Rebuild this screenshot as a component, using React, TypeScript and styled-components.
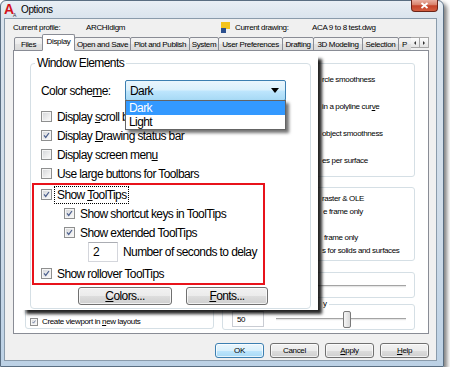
import React from 'react';
import styled, { createGlobalStyle } from 'styled-components';

const GlobalStyle = createGlobalStyle`
  html, body { margin: 0; padding: 0; background: #fff; overflow: hidden; }
  body { font-family: "Liberation Sans", Arial, sans-serif; color: #000; }
  * { box-sizing: border-box; }
`;

const Window = styled.div`
  position: relative;
  width: 444px;
  height: 367px;
  display: flex;
  flex-direction: column;
  padding: 0 6px 5px 3px;
  border: 1px solid #5a6e82;
  border-radius: 6px 6px 0 0;
  background: linear-gradient(180deg, #e9eff5 0%, #d9e3ed 5%, #cfdce9 60%, #bcd1e5 100%);
  box-shadow: 3px 3px 4px rgba(0, 0, 0, 0.5);
`;

const TitleBar = styled.div`
  height: 17px;
  display: flex;
  align-items: center;
  gap: 3px;
`;

const Title = styled.span`
  font-size: 10px;
  letter-spacing: -0.4px;
`;

const CloseButton = styled.div`
  margin-left: auto;
  margin-right: -1px;
  margin-top: -1px;
  align-self: flex-start;
  width: 27px;
  height: 12px;
  border: 1px solid #6b2418;
  border-top: none;
  border-radius: 0 0 4px 4px;
  background: linear-gradient(180deg, #eab0a2 0%, #d88069 45%, #c4432a 52%, #d35e40 100%);
  display: flex;
  align-items: center;
  justify-content: center;
`;

const Client = styled.div`
  flex: 1;
  display: flex;
  flex-direction: column;
  background: #f0f0f0;
  border: 1px solid #8a9bab;
  padding: 2px 7px 2px 8px;
  font-size: 8px;
  letter-spacing: -0.35px;
`;

const ProfileRow = styled.div`
  height: 13px;
  display: flex;
  align-items: center;
  white-space: nowrap;
`;

const Field = styled.span<{ $w?: number }>`
  flex: none;
  width: ${p => (p.$w ? `${p.$w}px` : 'auto')};
`;

const TabStrip = styled.div`
  height: 16px;
  display: flex;
  position: relative;
  z-index: 1;
`;

const TabList = styled.div`
  flex: 1;
  height: 17px;
  margin-bottom: -1px;
  padding-left: 1px;
  display: flex;
  align-items: flex-end;
  overflow: hidden;
`;

const Tab = styled.div<{ $w: number; $active?: boolean }>`
  flex: none;
  position: relative;
  z-index: ${p => (p.$active ? 2 : 1)};
  width: ${p => p.$w}px;
  height: ${p => (p.$active ? 17 : 14)}px;
  margin-right: -1px;
  border: 1px solid #898c95;
  border-bottom-color: ${p => (p.$active ? '#fff' : '#898c95')};
  border-radius: 2px 2px 0 0;
  background: ${p =>
    p.$active ? '#fff' : 'linear-gradient(180deg, #f4f4f4 0%, #ececec 50%, #e1e1e1 51%, #dadada 100%)'};
  display: flex;
  align-items: center;
  justify-content: ${p => (p.$w < 20 ? 'flex-start' : 'center')};
  padding: 0 0 ${p => (p.$active ? 2 : 0)}px ${p => (p.$w < 20 ? 3 : 0)}px;
  white-space: nowrap;
`;

const ScrollArrows = styled.div`
  display: flex;
  align-self: flex-start;
  margin-top: 3px;
`;

const ArrowButton = styled.div<{ $dir: 'left' | 'right' }>`
  width: 10px;
  height: 11px;
  margin-left: -1px;
  border: 1px solid #a7a7a7;
  background: linear-gradient(180deg, #fdfdfd, #e4e4e4);
  display: flex;
  align-items: center;
  justify-content: center;
  &::after {
    content: '';
    border-top: 2px solid transparent;
    border-bottom: 2px solid transparent;
    ${p => (p.$dir === 'left' ? 'border-right: 2px solid #333;' : 'border-left: 2px solid #333;')}
  }
`;

const Panel = styled.div`
  height: 284px;
  border: 1px solid #898c95;
  background: #fff;
  display: grid;
  grid-template-columns: 189px 193px;
  column-gap: 8px;
  padding: 7px 13px 3px 11px;
`;

const Column = styled.div`
  display: flex;
  flex-direction: column;
  min-height: 0;
`;

const Group = styled.fieldset<{ $h?: number; $mt?: number; $pl?: number; $pt?: number }>`
  margin: ${p => p.$mt || 0}px 0 0 0;
  min-width: 0;
  height: ${p => (p.$h ? `${p.$h}px` : 'auto')};
  border: 1px solid #d5dfe5;
  border-radius: 3px;
  padding: ${p => p.$pt ?? 1}px 8px 0 ${p => p.$pl ?? 8}px;
  display: flex;
  flex-direction: column;
`;

const Legend = styled.legend`
  padding: 0 2px;
  line-height: 10px;
  font-size: 8px;
`;

const SmallRow = styled.div<{ $h?: number }>`
  flex: none;
  height: ${p => p.$h || 13}px;
  display: flex;
  align-items: center;
  gap: 4px;
  white-space: nowrap;
`;

const ResList = styled.div`
  display: flex;
  flex-direction: column;
  gap: 7px;
`;

const ValueBox = styled.span<{ $w: number; $h?: number }>`
  flex: none;
  width: ${p => p.$w}px;
  height: ${p => p.$h || 16}px;
  border: 1px solid #c9ccd3;
  border-top-color: #abadb3;
  background: #fff;
  display: flex;
  align-items: center;
  padding-left: 4px;
`;

/* label whose start lies under the magnified callout: only its tail shows */
const Tail = styled.span<{ $from: number }>`
  margin-left: ${p => p.$from}px;
`;

const Track = styled.div<{ $gap?: number }>`
  position: relative;
  flex: 1;
  height: 3px;
  border-top: 1px solid #a4a4a4;
  border-bottom: 1px solid #fafafa;
  background: #e6e6e6;
  margin-left: ${p => p.$gap || 0}px;
`;

const Thumb = styled.div<{ $left: number }>`
  position: absolute;
  left: ${p => p.$left}px;
  top: -8px;
  width: 8px;
  height: 17px;
  border: 1px solid #7a7a7a;
  border-radius: 2px;
  background: linear-gradient(90deg, #f6f6f6, #d9d9d9);
`;

const Box = styled.span<{ $size: number }>`
  flex: none;
  width: ${p => p.$size}px;
  height: ${p => p.$size}px;
  border: 1px solid #8e8f8f;
  background: linear-gradient(135deg, #d2d4d7 0%, #f1f1f1 70%, #fbfbfb 100%);
  box-shadow: inset 0 0 0 1px #f5f5f5;
  display: flex;
  padding: 1px;
`;

const ButtonRow = styled.div`
  margin-top: 9px;
  height: 15px;
  display: flex;
  justify-content: flex-end;
  gap: 6px;
`;

const DialogButton = styled.div<{ $default?: boolean }>`
  width: 49px;
  height: 15px;
  border: 1px solid ${p => (p.$default ? '#3c7fb1' : '#707070')};
  border-radius: 3px;
  background: ${p =>
    p.$default
      ? 'linear-gradient(180deg, #eaf6fd 0%, #d9f0fc 50%, #bee6fd 51%, #a7d9f5 100%)'
      : 'linear-gradient(180deg, #f2f2f2 0%, #ebebeb 50%, #dddddd 51%, #cfcfcf 100%)'};
  box-shadow: inset 0 0 0 1px rgba(255, 255, 255, 0.7);
  display: flex;
  align-items: center;
  justify-content: center;
`;

/* magnified callout of the Window Elements group */
const Overlay = styled.div`
  position: absolute;
  left: 21px;
  top: 54px;
  width: 296px;
  height: 255px;
  z-index: 5;
  background: #fff;
  padding: 1px 7px 2px 8px;
  box-shadow: 4px 4px 3px rgba(0, 0, 0, 0.85);
  font-size: 12px;
  letter-spacing: -0.6px;
`;

const BigGroup = styled.fieldset`
  margin: 0;
  min-width: 0;
  height: 253px;
  border: 1px solid #d5dfe5;
  border-radius: 4px;
  padding: 10px 0 0 10px;
  display: flex;
  flex-direction: column;
`;

const BigLegend = styled.legend`
  margin-left: -6px;
  padding: 0 2px;
  line-height: 14px;
  font-size: 12px;
`;

const ColorRow = styled.div`
  height: 21px;
  display: flex;
  align-items: center;
`;

const ColorLabel = styled.span`
  width: 84px;
  flex: none;
`;

const Combo = styled.div`
  position: relative;
  width: 161px;
  height: 21px;
  border: 1px solid #3c7fb1;
  border-radius: 2px;
  background: linear-gradient(180deg, #eaf6fd 0%, #d9f0fc 48%, #bee6fd 52%, #a7d9f5 100%);
  display: flex;
  align-items: center;
  padding: 0 6px 0 4px;
  justify-content: space-between;
`;

const DropList = styled.div`
  position: absolute;
  left: -1px;
  top: 100%;
  width: 161px;
  border: 1px solid #646464;
  background: #fff;
  box-shadow: 3px 3px 3px rgba(0, 0, 0, 0.55);
`;

const DropItem = styled.div<{ $active?: boolean }>`
  height: 14px;
  line-height: 14px;
  padding-left: 3px;
  background: ${p => (p.$active ? '#3399ff' : 'transparent')};
  color: ${p => (p.$active ? '#fff' : '#000')};
`;

const CheckRow = styled.div<{ $indent?: number; $mt?: number; $h?: number }>`
  flex: none;
  height: ${p => p.$h || 19}px;
  margin-top: ${p => p.$mt || 0}px;
  padding-left: ${p => p.$indent || 0}px;
  display: flex;
  align-items: center;
  gap: 5px;
  white-space: nowrap;
`;

const Focus = styled.span`
  outline: 1px dotted #000;
  outline-offset: 0;
  padding: 1px 1px 1px 2px;
  margin-left: -2px;
`;

const Highlight = styled.div`
  width: 233px;
  margin-left: -9px;
  padding: 0 0 0 7px;
  border: 2px solid #e8131b;
`;

const NumberBox = styled.span`
  flex: none;
  width: 30px;
  height: 20px;
  border: 1px solid #d4d6dc;
  border-top-color: #abadb3;
  padding-left: 4px;
  display: flex;
  align-items: center;
`;

const BigButtons = styled.div`
  margin-top: 2px;
  padding-left: 37px;
  display: flex;
  gap: 14px;
`;

const BigButton = styled.div<{ $w: number }>`
  width: ${p => p.$w}px;
  height: 18px;
  border: 1px solid #707070;
  border-radius: 3px;
  background: linear-gradient(180deg, #f2f2f2 0%, #ebebeb 50%, #dddddd 51%, #cfcfcf 100%);
  box-shadow: inset 0 0 0 1px rgba(255, 255, 255, 0.7);
  display: flex;
  align-items: center;
  justify-content: center;
`;

const CheckMark = () => (
  <svg width="100%" height="100%" viewBox="0 0 11 11">
    <path d="M1.6 5.4 L4.3 8.6 L9.4 1.6" fill="none" stroke="#4b5f8d" strokeWidth="1.9" />
  </svg>
);

const Checkbox = ({ checked, size = 11 }: { checked?: boolean; size?: number }) => (
  <Box $size={size}>{checked && <CheckMark />}</Box>
);

const tabs = [
  { label: 'Files', w: 29 },
  { label: 'Display', w: 33, active: true },
  { label: 'Open and Save', w: 57 },
  { label: 'Plot and Publish', w: 60 },
  { label: 'System', w: 30 },
  { label: 'User Preferences', w: 65 },
  { label: 'Drafting', w: 32 },
  { label: '3D Modeling', w: 50 },
  { label: 'Selection', w: 37 },
  { label: 'P', w: 16 },
];

export default function App() {
  return (
    <>
      <GlobalStyle />
      <Window>
        <TitleBar>
          <svg width="14" height="15" viewBox="0 0 14 15">
            <text x="0" y="12" fontSize="14" fontWeight="bold" fill="#d3121c" fontFamily="Liberation Sans, sans-serif">A</text>
            <text x="9" y="15" fontSize="5" fill="#333" fontFamily="Liberation Sans, sans-serif">A</text>
          </svg>
          <Title>Options</Title>
          <CloseButton>
            <svg width="9" height="7" viewBox="0 0 9 7">
              <path d="M1.5 1 L7.5 6 M7.5 1 L1.5 6" stroke="#fff" strokeWidth="1.8" />
            </svg>
          </CloseButton>
        </TitleBar>

        <Client>
          <ProfileRow>
            <Field $w={73}>Current profile:</Field>
            <Field $w={135}>ARCHIdigm</Field>
            <svg width="9" height="11" viewBox="0 0 9 11">
              <rect x="0" y="0" width="9" height="7" fill="#f3c31c" />
              <rect x="0" y="6" width="5" height="5" fill="#2b4f8e" />
            </svg>
            <Field $w={77} style={{ marginLeft: 5 }}>Current drawing:</Field>
            <Field>ACA 9 to 8 test.dwg</Field>
          </ProfileRow>

          <TabStrip>
            <TabList>
              {tabs.map(t => (
                <Tab key={t.label} $w={t.w} $active={t.active}>
                  {t.label}
                </Tab>
              ))}
            </TabList>
            <ScrollArrows>
              <ArrowButton $dir="left" />
              <ArrowButton $dir="right" />
            </ScrollArrows>
          </TabStrip>

          <Panel>
            <Column>
              <Group $h={89} $pl={4} $pt={74} style={{ marginTop: 'auto', marginBottom: 1 }}>
                <SmallRow>
                  <Checkbox size={8} checked />
                  <span>Create viewport in <u>n</u>ew layouts</span>
                </SmallRow>
              </Group>
            </Column>

            <Column>
              <Group $h={119}>
                <Legend>Display resolution</Legend>
                <ResList>
                  <SmallRow $h={20}>
                    <ValueBox $w={40} />
                    <Tail $from={47}>rcle smoothness</Tail>
                  </SmallRow>
                  <SmallRow $h={20}>
                    <ValueBox $w={40} />
                    <Tail $from={47}>in a polyline cur<u>v</u>e</Tail>
                  </SmallRow>
                  <SmallRow $h={20}>
                    <ValueBox $w={40} />
                    <Tail $from={47}>object smoothness</Tail>
                  </SmallRow>
                  <SmallRow $h={20}>
                    <ValueBox $w={40} />
                    <Tail $from={47}>es per surface</Tail>
                  </SmallRow>
                </ResList>
              </Group>
              <Group $h={79} $mt={5} $pt={0}>
                <Legend>Display performance</Legend>
                <SmallRow>
                  <Checkbox size={9} />
                  <Tail $from={78}>raster &amp; OLE</Tail>
                </SmallRow>
                <SmallRow>
                  <Checkbox size={9} checked />
                  <Tail $from={79}>e frame only</Tail>
                </SmallRow>
                <SmallRow>
                  <Checkbox size={9} checked />
                </SmallRow>
                <SmallRow>
                  <Checkbox size={9} />
                  <Tail $from={80}>frame only</Tail>
                </SmallRow>
                <SmallRow>
                  <Checkbox size={9} />
                  <Tail $from={78}>s for solids and surfaces</Tail>
                </SmallRow>
              </Group>
              <Group $h={31} $mt={6}>
                <Legend>Crosshair size</Legend>
                <SmallRow $h={16}>
                  <ValueBox $w={40} $h={15} />
                  <Track />
                </SmallRow>
              </Group>
              <Group $h={31} $mt={1} $pl={9}>
                <Legend>
                  <Tail $from={89}>y</Tail>
                </Legend>
                <SmallRow $h={18}>
                  <ValueBox $w={32}>50</ValueBox>
                  <Track $gap={8}>
                    <Thumb $left={67} />
                  </Track>
                </SmallRow>
              </Group>
            </Column>
          </Panel>

          <ButtonRow>
            <DialogButton $default>OK</DialogButton>
            <DialogButton>Cancel</DialogButton>
            <DialogButton><span><u>A</u>pply</span></DialogButton>
            <DialogButton><span><u>H</u>elp</span></DialogButton>
          </ButtonRow>
        </Client>

        <Overlay>
          <BigGroup>
            <BigLegend>Window Elements</BigLegend>
            <ColorRow>
              <ColorLabel>Color sche<u>m</u>e:</ColorLabel>
              <Combo>
                <span>Dark</span>
                <svg width="8" height="5" viewBox="0 0 8 5">
                  <polygon points="0,0 8,0 4,5" fill="#000" />
                </svg>
                <DropList>
                  <DropItem $active>Dark</DropItem>
                  <DropItem>Light</DropItem>
                </DropList>
              </Combo>
            </ColorRow>
            <CheckRow $mt={6}>
              <Checkbox />
              <span>Display <u>s</u>croll b</span>
            </CheckRow>
            <CheckRow>
              <Checkbox checked />
              <span>Display <u>D</u>rawing status bar</span>
            </CheckRow>
            <CheckRow>
              <Checkbox />
              <span>Display screen men<u>u</u></span>
            </CheckRow>
            <CheckRow>
              <Checkbox />
              <span>Use large buttons for Toolbars</span>
            </CheckRow>
            <Highlight>
              <CheckRow>
                <Checkbox checked />
                <Focus>Show <u>T</u>oolTips</Focus>
              </CheckRow>
              <CheckRow $indent={23}>
                <Checkbox checked />
                <span>Show shortcut keys in ToolTips</span>
              </CheckRow>
              <CheckRow $indent={23}>
                <Checkbox checked />
                <span>Show extended ToolTips</span>
              </CheckRow>
              <CheckRow $indent={47} $h={20}>
                <NumberBox>2</NumberBox>
                <span>Number of seconds to delay</span>
              </CheckRow>
              <CheckRow $mt={2}>
                <Checkbox checked />
                <span>Show rollover ToolTips</span>
              </CheckRow>
            </Highlight>
            <BigButtons>
              <BigButton $w={94}><span><u>C</u>olors...</span></BigButton>
              <BigButton $w={82}><span><u>F</u>onts...</span></BigButton>
            </BigButtons>
          </BigGroup>
        </Overlay>
      </Window>
    </>
  );
}
